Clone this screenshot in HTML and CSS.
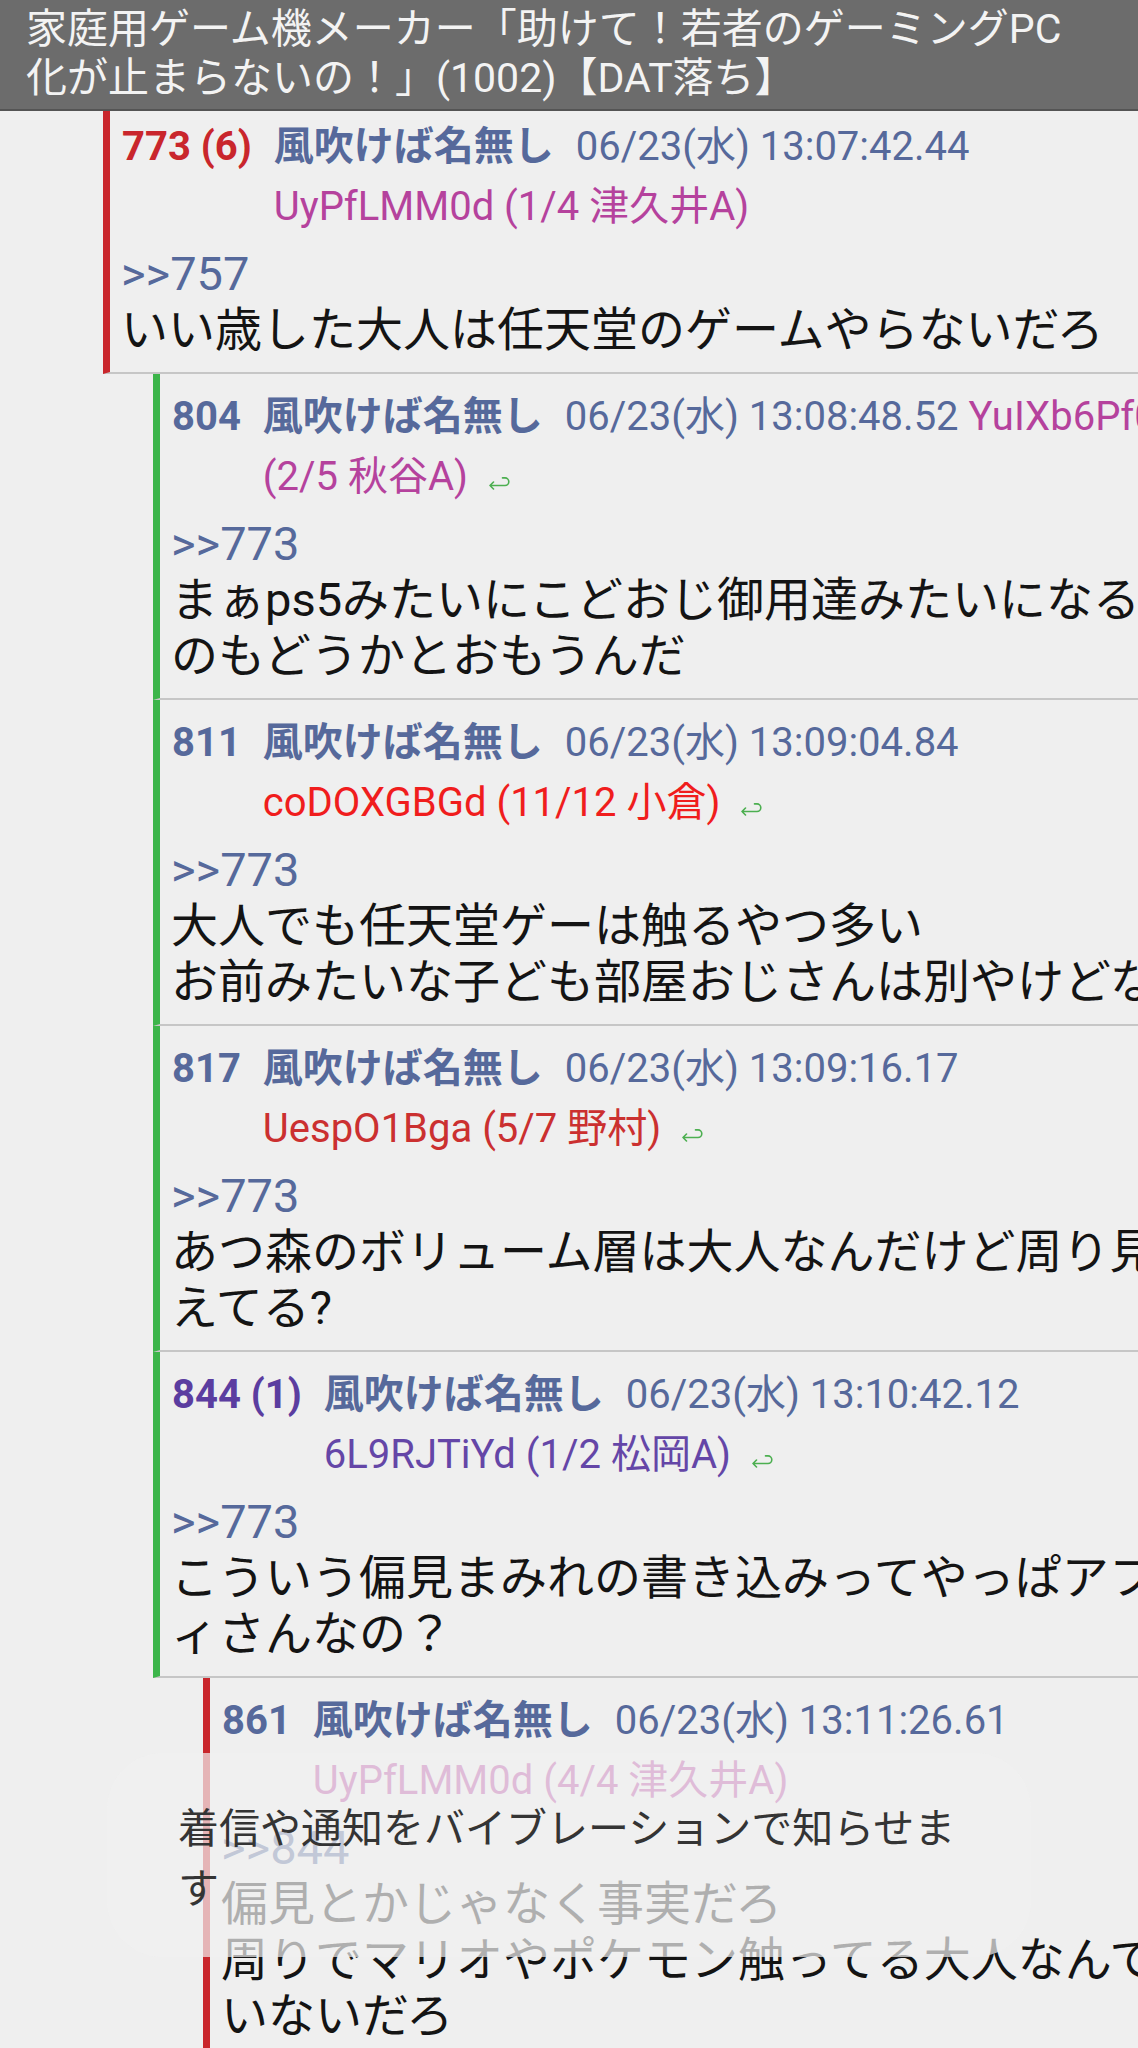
FILE: index.html
```html
<!DOCTYPE html>
<html lang="ja">
<head>
<meta charset="utf-8">
<title>スレッド</title>
<link rel="stylesheet" href="styles.css">
</head>
<body>
<header class="titlebar">
  <div class="title">家庭用ゲーム機メーカー「助けて！若者のゲーミングPC<br>化が止まらないの！」(1002)【DAT落ち】</div>
</header>

<main class="thread">
  <article class="post post--first bar-red">
    <div class="head">
      <span class="num c-red">773 (6)</span>
      <div class="meta">
        <div class="meta-line"><span class="name">風吹けば名無し</span><span class="date">06/23(水) 13:07:42.44</span></div>
        <div class="meta-line"><span class="id c-magenta">UyPfLMM0d (1/4 津久井A)</span></div>
      </div>
    </div>
    <div class="body"><span class="anchor">&gt;&gt;757</span><br>いい歳した大人は任天堂のゲームやらないだろ</div>
  </article>

  <div class="replies">
    <article class="post bar-green">
      <div class="head">
        <span class="num c-blue">804</span>
        <div class="meta">
          <div class="meta-line"><span class="name">風吹けば名無し</span><span class="date">06/23(水) 13:08:48.52</span><span class="id id--inline c-magenta">YuIXb6Pf0</span></div>
          <div class="meta-line"><span class="id c-magenta">(2/5 秋谷A)</span><svg class="reply-icon" viewBox="0 0 26 16" aria-hidden="true"><path d="M4 11.5H19a3.8 3.8 0 0 0 0-7.6h-2.5M7.5 8 4 11.5 7.5 15"/></svg></div>
        </div>
      </div>
      <div class="body"><span class="anchor">&gt;&gt;773</span><br>まぁps5みたいにこどおじ御用達みたいになる<br>のもどうかとおもうんだ</div>
    </article>

    <article class="post bar-green">
      <div class="head">
        <span class="num c-blue">811</span>
        <div class="meta">
          <div class="meta-line"><span class="name">風吹けば名無し</span><span class="date">06/23(水) 13:09:04.84</span></div>
          <div class="meta-line"><span class="id c-brightred">coDOXGBGd (11/12 小倉)</span><svg class="reply-icon" viewBox="0 0 26 16" aria-hidden="true"><path d="M4 11.5H19a3.8 3.8 0 0 0 0-7.6h-2.5M7.5 8 4 11.5 7.5 15"/></svg></div>
        </div>
      </div>
      <div class="body"><span class="anchor">&gt;&gt;773</span><br>大人でも任天堂ゲーは触るやつ多い<br>お前みたいな子ども部屋おじさんは別やけどな</div>
    </article>

    <article class="post bar-green">
      <div class="head">
        <span class="num c-blue">817</span>
        <div class="meta">
          <div class="meta-line"><span class="name">風吹けば名無し</span><span class="date">06/23(水) 13:09:16.17</span></div>
          <div class="meta-line"><span class="id c-darkred">UespO1Bga (5/7 野村)</span><svg class="reply-icon" viewBox="0 0 26 16" aria-hidden="true"><path d="M4 11.5H19a3.8 3.8 0 0 0 0-7.6h-2.5M7.5 8 4 11.5 7.5 15"/></svg></div>
        </div>
      </div>
      <div class="body"><span class="anchor">&gt;&gt;773</span><br>あつ森のボリューム層は大人なんだけど周り見<br>えてる?</div>
    </article>

    <article class="post bar-green">
      <div class="head">
        <span class="num c-purple">844 (1)</span>
        <div class="meta">
          <div class="meta-line"><span class="name">風吹けば名無し</span><span class="date">06/23(水) 13:10:42.12</span></div>
          <div class="meta-line"><span class="id c-violet">6L9RJTiYd (1/2 松岡A)</span><svg class="reply-icon" viewBox="0 0 26 16" aria-hidden="true"><path d="M4 11.5H19a3.8 3.8 0 0 0 0-7.6h-2.5M7.5 8 4 11.5 7.5 15"/></svg></div>
        </div>
      </div>
      <div class="body"><span class="anchor">&gt;&gt;773</span><br>こういう偏見まみれの書き込みってやっぱアフ<br>ィさんなの？</div>
    </article>

    <div class="replies">
      <article class="post bar-red">
        <div class="head">
          <span class="num c-blue">861</span>
          <div class="meta">
            <div class="meta-line"><span class="name">風吹けば名無し</span><span class="date">06/23(水) 13:11:26.61</span></div>
            <div class="meta-line"><span class="id c-magenta">UyPfLMM0d (4/4 津久井A)</span></div>
          </div>
        </div>
        <div class="body"><span class="anchor">&gt;&gt;844</span><br>偏見とかじゃなく事実だろ<br>周りでマリオやポケモン触ってる大人なんて<br>いないだろ</div>
      </article>
    </div>
  </div>
</main>

<div class="toast">着信や通知をバイブレーションで知らせます</div>
</body>
</html>
```

FILE: styles.css
```css
html, body {
  margin: 0;
  padding: 0;
  overflow-x: hidden;
}

body {
  width: 1138px;
  min-height: 2048px;
  background: #efefef;
  font-family: Roboto, "Noto Sans CJK JP", sans-serif;
  color: #141414;
  position: relative;
}

.titlebar {
  box-sizing: border-box;
  height: 111px;
  background: #6c6c6c;
  border-bottom: 2px solid #545454;
  padding: 5px 20px 0 26px;
}

.title {
  font-size: 41px;
  line-height: 49px;
  color: #f3f3f3;
  white-space: nowrap;
}

.thread {
  padding-left: 103px;
}

.replies {
  margin-left: 50px;
}

.post {
  box-sizing: border-box;
  width: 1035px;
  border-left: 7px solid transparent;
  border-bottom: 2px solid #c6c6c6;
  padding: 13px 0 14px 11px;
}

.post--first {
  padding-top: 6px;
}

.bar-red { border-left-color: #c9262c; }
.bar-green { border-left-color: #3cb54a; }

.head {
  display: flex;
  align-items: flex-start;
  font-size: 40px;
  line-height: 60px;
}

.num {
  font-weight: 700;
  margin-left: 1px;
  margin-right: 22px;
  white-space: nowrap;
}

.meta-line {
  white-space: nowrap;
  display: flex;
  align-items: center;
}

.meta-line > span {
  white-space: pre;
}

.name {
  font-weight: 700;
  color: #56699b;
  margin-right: 22px;
}

.date {
  color: #56699b;
}

.id--inline {
  margin-left: 10px;
}

.reply-icon {
  width: 26px;
  height: 16px;
  margin-left: 18px;
  margin-top: 10px;
  fill: none;
  stroke: #4caf50;
  stroke-width: 1.6;
  stroke-linecap: round;
  stroke-linejoin: round;
}

.c-red { color: #c9262c; }
.c-blue { color: #56699b; }
.c-magenta { color: #b5429d; }
.c-brightred { color: #f01d1d; }
.c-darkred { color: #cb3030; }
.c-purple { color: #5b3da0; }
.c-violet { color: #6446a7; }

.body {
  margin-top: 9px;
  font-size: 47px;
  line-height: 56px;
  white-space: nowrap;
}

.anchor {
  color: #56699b;
}

.toast {
  position: absolute;
  left: 107px;
  top: 1753px;
  box-sizing: border-box;
  width: 924px;
  height: 204px;
  padding: 42px 71px;
  border-radius: 56px;
  background: rgba(241, 241, 241, 0.7);
  color: #343434;
  font-family: "Noto Sans CJK JP", sans-serif;
  font-size: 41px;
  line-height: 60px;
}
```
